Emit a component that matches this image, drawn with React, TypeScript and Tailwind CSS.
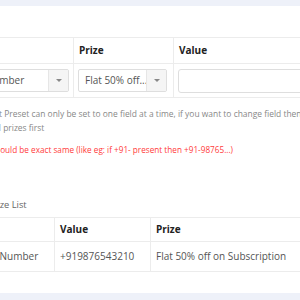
// ── Small building blocks ──────────────────────────────────────────────────

function SelectBox({ value, className }: { value: string; className?: string }) {
  return (
    <div
      className={`flex h-[23px] items-stretch overflow-hidden rounded-[2px] border border-[#dedede] bg-white ${className ?? ""}`}
    >
      <div className="flex min-w-0 flex-1 items-center truncate pl-[6px] text-[#555]">{value}</div>
      <div className="flex w-[20px] items-center justify-center border-l border-[#e6e6e6] bg-[#f5f5f5]">
        <span className="block h-0 w-0 border-x-[3px] border-t-[3px] border-x-transparent border-t-[#888]" />
      </div>
    </div>
  );
}

const cellBorder = "border-[#ececec]";

export default function App() {
  return (
    <div className="h-[300px] w-[300px] overflow-hidden bg-[#eef1f9] pt-[6px] font-['Open_Sans',sans-serif] text-[10px]">
      <div className="ml-[-70px] h-[287px] w-[480px] bg-white pt-[31px]">
        {/* Preset table */}
        <div className={`ml-[12px] grid grid-cols-[131px_100px_1fr] border-t ${cellBorder}`}>
          <div className={`flex h-[26px] items-center border-b ${cellBorder} px-[5px] font-bold text-[#222]`}>Field</div>
          <div className={`flex h-[26px] items-center border-b border-l ${cellBorder} px-[5px] font-bold text-[#222]`}>Prize</div>
          <div className={`flex h-[26px] items-center border-b border-l ${cellBorder} px-[5px] font-bold text-[#222]`}>Value</div>

          <div className={`flex h-[34px] items-center border-b ${cellBorder} px-[4px]`}>
            <SelectBox value="Phone Number" className="w-full" />
          </div>
          <div className={`flex h-[34px] items-center border-b border-l ${cellBorder} px-[4px]`}>
            <SelectBox value="Flat 50% off..." className="w-[89px]" />
          </div>
          <div className={`flex h-[34px] items-center border-b border-l ${cellBorder} px-[4px]`}>
            <input
              className="h-[24px] w-full rounded-[3px] border border-[#dedede] px-[6px] text-[#555] outline-none"
              defaultValue=""
            />
          </div>
        </div>

        {/* Notes */}
        <div className="ml-[62px] mt-[9px] w-[338px] leading-[14px]">
          <p className="-indent-[25px] text-[8.45px] text-[#888]">
            Prize List Preset can only be set to one field at a time, if you want to change field then
            delete all prizes first
          </p>
          <p className="mt-[8px] -indent-[24px] text-[8.2px] text-[#ff3b3b]">
            Value should be exact same (like eg: if +91- present then +91-98765...)
          </p>
        </div>

        {/* Prize list */}
        <h3 className="ml-[58px] mt-[40px] text-[9.3px] leading-[16px] text-[#666]">Prize List</h3>
        <div className={`ml-[32px] mt-[4px] grid grid-cols-[92px_96px_1fr] border-t ${cellBorder}`}>
          <div className={`flex h-[24px] items-center border-b ${cellBorder} px-[5px] font-bold text-[#222]`}>Field</div>
          <div className={`flex h-[24px] items-center border-b border-l ${cellBorder} px-[5px] font-bold text-[#222]`}>Value</div>
          <div className={`flex h-[24px] items-center border-b border-l ${cellBorder} px-[5px] font-bold text-[#222]`}>Prize</div>

          <div className={`flex h-[30px] items-center border-b ${cellBorder} px-[5px] text-[#555]`}>Phone Number</div>
          <div className={`flex h-[30px] items-center border-b border-l ${cellBorder} px-[5px] text-[#555]`}>+919876543210</div>
          <div className={`flex h-[30px] items-center border-b border-l ${cellBorder} px-[5px] text-[#555]`}>Flat 50% off on Subscription</div>
        </div>
      </div>
    </div>
  );
}
